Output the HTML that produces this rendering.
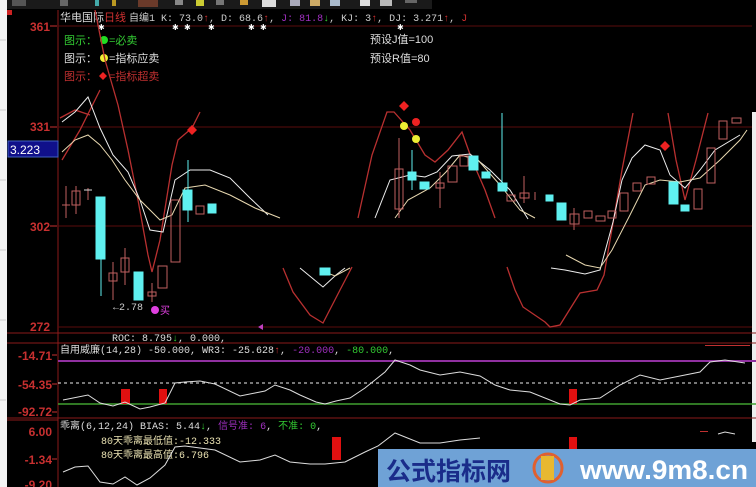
<!DOCTYPE html>
<html><head><meta charset="utf-8"><style>
html,body{margin:0;padding:0;background:#000;width:756px;height:487px;overflow:hidden}
svg{display:block}
text{font-family:"Liberation Sans","Noto Sans CJK SC",sans-serif}
.m{font-family:"Liberation Mono","Noto Sans CJK SC",monospace}
</style></head><body>
<svg width="756" height="487" xmlns="http://www.w3.org/2000/svg">
<rect width="756" height="487" fill="#000"/>
<rect x="0" y="0" width="7" height="487" fill="#f4f4f4"/>
<g stroke="#ccc" stroke-width="1"><line x1="0" y1="40" x2="6" y2="40"/><line x1="0" y1="110" x2="6" y2="110"/><line x1="0" y1="180" x2="6" y2="180"/><line x1="0" y1="250" x2="6" y2="250"/><line x1="0" y1="320" x2="6" y2="320"/><line x1="0" y1="400" x2="6" y2="400"/></g>
<rect x="752" y="112" width="4" height="330" fill="#eee"/>
<rect x="7" y="0" width="425" height="9" fill="#1a1a1a"/>
<g>
<rect x="12" y="0" width="14" height="6" fill="#555"/>
<rect x="60" y="0" width="8" height="6" fill="#666"/>
<rect x="95" y="0" width="4" height="6" fill="#4aa"/>
<rect x="112" y="0" width="4" height="6" fill="#b92"/>
<rect x="138" y="0" width="20" height="7" fill="#6a3a2a"/>
<rect x="175" y="0" width="8" height="5" fill="#888"/>
<rect x="196" y="0" width="8" height="6" fill="#cc3"/>
<rect x="216" y="0" width="8" height="5" fill="#777"/>
<rect x="240" y="0" width="8" height="5" fill="#c93"/>
<rect x="262" y="0" width="14" height="7" fill="#ddd"/>
<rect x="290" y="0" width="10" height="6" fill="#aab"/>
<rect x="310" y="0" width="10" height="6" fill="#ca6"/>
<rect x="330" y="0" width="10" height="6" fill="#abc"/>
<rect x="360" y="0" width="10" height="6" fill="#ddd"/>
<rect x="380" y="0" width="12" height="6" fill="#bbb"/>
<rect x="405" y="0" width="12" height="3" fill="#666"/>
</g>
<line x1="58" y1="10" x2="58" y2="487" stroke="#8a1a1a"/>
<rect x="7" y="10" width="5" height="5" fill="#c22"/>
<g stroke="#5a0c0c" stroke-width="1">
<line x1="58" y1="26" x2="752" y2="26"/>
<line x1="58" y1="127" x2="752" y2="127"/>
<line x1="58" y1="226" x2="752" y2="226"/>
<line x1="58" y1="327" x2="752" y2="327"/>
</g>
<line x1="7" y1="333" x2="756" y2="333" stroke="#8a1a1a"/>
<line x1="7" y1="343" x2="756" y2="343" stroke="#8a1a1a"/>
<line x1="7" y1="418" x2="756" y2="418" stroke="#8a1a1a"/>
<line x1="7" y1="420" x2="58" y2="420" stroke="#8a1a1a"/>
<g fill="#c83030" font-size="12" text-anchor="end" font-weight="bold">
<text x="50" y="31">361</text>
<text x="50" y="131">331</text>
<text x="50" y="231">302</text>
<text x="50" y="331">272</text>
<text x="52" y="360">-14.71</text>
<text x="52" y="389">-54.35</text>
<text x="52" y="416">-92.72</text>
<text x="52" y="436">6.00</text>
<text x="52" y="464">-1.34</text>
<text x="52" y="489">-9.20</text>
</g>
<g stroke="#c83030"><line x1="50" y1="26" x2="57" y2="26"/><line x1="50" y1="127" x2="57" y2="127"/><line x1="50" y1="226" x2="57" y2="226"/><line x1="52" y1="355" x2="57" y2="355"/><line x1="52" y1="384" x2="57" y2="384"/><line x1="52" y1="412" x2="57" y2="412"/><line x1="52" y1="459" x2="57" y2="459"/></g>
<rect x="8" y="141" width="50" height="16" fill="#10108a" stroke="#4060c0"/>
<text x="10" y="154" fill="#fff" font-size="12">3.223</text>
<text x="60" y="21" font-size="11" fill="#ddd">华电国际</text>
<text x="104" y="21" font-size="11" fill="#d03030">日线</text>
<text x="129" y="21" font-size="10" fill="#ccc" class="m">自编1 K: 73.0<tspan fill="#d03030">↑</tspan>, D: 68.6<tspan fill="#d03030">↑</tspan>, <tspan fill="#a030c0">J: 81.8</tspan><tspan fill="#3c3">↓</tspan>, KJ: 3<tspan fill="#d03030">↑</tspan>, DJ: 3.271<tspan fill="#d03030">↑</tspan>, <tspan fill="#d03030">J</tspan></text>
<g fill="#fff" font-size="8"><text x="98" y="30">✱</text><text x="172" y="30">✱</text><text x="184" y="30">✱</text><text x="208" y="30">✱</text><text x="248" y="30">✱</text><text x="260" y="30">✱</text><text x="397" y="30">✱</text></g>
<text x="64" y="44" font-size="11" fill="#3c3">图示：</text><circle cx="104" cy="40" r="4" fill="#2d2"/><text x="109" y="44" font-size="11" fill="#3c3">=必卖</text>
<text x="64" y="62" font-size="11" fill="#ddd">图示：</text><circle cx="104" cy="58" r="4" fill="#ee3"/><text x="109" y="62" font-size="11" fill="#ddd">=指标应卖</text>
<text x="64" y="80" font-size="11" fill="#c03030">图示：</text><path d="M103 72l4 4-4 4-4-4z" fill="#e22"/><text x="109" y="80" font-size="11" fill="#c03030">=指标超卖</text>
<text x="370" y="43" font-size="11" fill="#ddd">预设J值=100</text>
<text x="370" y="62" font-size="11" fill="#ddd">预设R值=80</text>
<g fill="none" stroke="#b83030" stroke-width="1.3">
<polyline points="95,10 105,60 118,105 128,150 138,200 148,255 152,272 160,240 172,165 178,140 192,128 200,112"/>
<polyline points="62,160 80,130 100,90"/>
<polyline points="283,268 293,292 310,315 323,323 340,290 352,267"/>
<polyline points="358,218 372,155 387,112 394,112 410,130 425,155 435,162 448,150 462,132 472,160 485,190 495,218"/>
<polyline points="507,267 515,290 523,307 545,322 550,327 560,325 580,293 597,290 604,275 613,223 622,170 633,113"/>
<polyline points="668,113 676,160 685,200 696,160 708,113"/>
<polyline points="60,118 75,110 90,115"/>
</g>
<g fill="none" stroke="#eee" stroke-width="1">
<polyline points="62,122 75,112 88,97 100,128 113,155 128,172 140,200 150,230 163,232 175,180 190,170 210,170 230,178 250,198 268,215"/>
<polyline points="375,218 390,180 410,175 425,177 437,172 452,156 470,154 490,170 510,190 528,219"/>
<polyline points="300,268 323,287 336,275 345,268"/>
<polyline points="551,268 565,270 585,274 600,270 613,222 622,180 632,158 645,145 660,150 670,175 685,188 700,170 715,150 740,135"/>
</g>
<g fill="none" stroke="#e8d8b0" stroke-width="1">
<polyline points="62,152 75,140 88,135 100,145 112,160 125,180 140,200 160,220 172,215 185,188 205,185 230,195 255,208 280,218"/>
<polyline points="395,218 408,200 430,188 446,172 460,155 478,160 500,185 520,210 535,218"/>
<polyline points="320,270 335,276 350,268"/>
<polyline points="566,255 585,265 600,268 612,250 630,215 645,185 660,180 680,182 700,178 720,160 740,140 747,130"/>
</g>
<g fill="#5ff0f0" stroke="#5ff0f0">
<rect x="96" y="197" width="9" height="62"/><line x1="101" y1="259" x2="101" y2="296"/>
<rect x="134" y="272" width="9" height="28"/>
<rect x="183" y="190" width="9" height="20"/><line x1="188" y1="160" x2="188" y2="222"/>
<rect x="208" y="204" width="8" height="9"/>
<rect x="320" y="268" width="10" height="7"/>
<rect x="408" y="172" width="8" height="8"/><line x1="412" y1="150" x2="412" y2="190"/>
<rect x="420" y="182" width="9" height="7"/>
<rect x="469" y="156" width="9" height="14"/>
<rect x="482" y="172" width="8" height="6"/>
<rect x="498" y="183" width="9" height="8"/><line x1="502" y1="113" x2="502" y2="183"/>
<rect x="546" y="195" width="7" height="6"/>
<rect x="557" y="203" width="9" height="17"/>
<rect x="669" y="182" width="9" height="22"/>
<rect x="681" y="205" width="8" height="6"/>
</g>
<g fill="none" stroke="#c06060">
<line x1="66" y1="186" x2="66" y2="218"/><line x1="62" y1="205" x2="70" y2="205"/>
<rect x="72" y="191" width="8" height="14"/><line x1="76" y1="186" x2="76" y2="214"/>
<line x1="88" y1="188" x2="88" y2="200"/><line x1="84" y1="190" x2="92" y2="190" stroke="#ddd"/>
<rect x="109" y="273" width="8" height="8"/><line x1="113" y1="262" x2="113" y2="300"/>
<rect x="121" y="258" width="8" height="14"/><line x1="125" y1="248" x2="125" y2="285"/>
<rect x="148" y="292" width="8" height="4"/><line x1="152" y1="283" x2="152" y2="302"/>
<rect x="158" y="266" width="9" height="22"/>
<rect x="171" y="200" width="9" height="62"/>
<rect x="196" y="206" width="8" height="8"/>
<rect x="395" y="169" width="8" height="40"/><line x1="399" y1="138" x2="399" y2="218"/>
<rect x="436" y="183" width="8" height="5"/><line x1="440" y1="172" x2="440" y2="208"/>
<rect x="448" y="166" width="9" height="16"/>
<rect x="460" y="156" width="8" height="10"/>
<rect x="507" y="195" width="8" height="6"/>
<rect x="520" y="193" width="9" height="5"/><line x1="524" y1="176" x2="524" y2="203"/>
<line x1="535" y1="192" x2="535" y2="200"/>
<rect x="570" y="214" width="9" height="10"/><line x1="574" y1="208" x2="574" y2="230"/>
<rect x="584" y="211" width="8" height="7"/>
<rect x="596" y="216" width="9" height="5"/>
<rect x="608" y="211" width="8" height="7"/>
<rect x="620" y="193" width="8" height="18"/>
<rect x="633" y="183" width="8" height="8"/>
<rect x="647" y="177" width="8" height="7"/>
<rect x="694" y="189" width="8" height="20"/>
<rect x="707" y="148" width="8" height="35"/>
<rect x="719" y="121" width="8" height="18"/>
<rect x="732" y="118" width="9" height="5"/>
</g>
<path d="M192 125l5 5-5 5-5-5z" fill="#e22"/>
<path d="M404 101l5 5-5 5-5-5z" fill="#e22"/>
<circle cx="404" cy="126" r="4" fill="#ee3"/><circle cx="416" cy="122" r="4" fill="#e22"/><circle cx="416" cy="139" r="4" fill="#ee3"/>
<path d="M665 141l5 5-5 5-5-5z" fill="#e22"/>
<text x="113" y="310" font-size="10" fill="#ccc" class="m">←2.78</text>
<circle cx="155" cy="310" r="4" fill="#e040e0"/><text x="160" y="314" font-size="10" fill="#e040e0">买</text>
<path d="M258 327l5-3v6z" fill="#c040c0"/>
<text x="112" y="341" font-size="10" fill="#ddd" class="m">ROC: 8.795<tspan fill="#3c3">↓</tspan>, 0.000,</text>
<text x="60" y="353" font-size="10" fill="#ddd" class="m">自用威廉(14,28) -50.000, WR3: -25.628<tspan fill="#d03030">↑</tspan>, <tspan fill="#a030c0">-20.000</tspan>, <tspan fill="#3c3">-80.000</tspan>,</text>
<line x1="58" y1="361" x2="756" y2="361" stroke="#9030a0" stroke-width="2"/>
<line x1="58" y1="383" x2="756" y2="383" stroke="#eee" stroke-dasharray="3,3"/>
<line x1="58" y1="404" x2="756" y2="404" stroke="#40a030" stroke-width="1.5"/>
<rect x="121" y="389" width="9" height="15" fill="#e01010"/>
<rect x="159" y="389" width="8" height="15" fill="#e01010"/>
<rect x="569" y="389" width="8" height="15" fill="#e01010"/>
<polyline fill="none" stroke="#ddd" points="63,400 88,395 100,403 113,406 125,402 140,409 150,407 165,403 175,383 185,382 200,381 215,384 240,396 255,393 265,391 275,385 290,390 300,395 316,402 325,404 336,401 350,398 365,388 385,372 395,360 410,365 420,370 440,375 460,372 480,376 495,385 510,390 530,392 550,400 560,404 570,405 580,400 600,398 620,385 640,375 660,380 680,376 700,372 710,362 725,360 745,363"/>
<rect x="705" y="345" width="45" height="1" fill="#c03030"/>
<text x="60" y="429" font-size="10" fill="#ddd" class="m">乖离(6,12,24) BIAS: 5.44<tspan fill="#3c3">↓</tspan>, <tspan fill="#a030c0">信号准: 6</tspan>, <tspan fill="#3c3">不准: 0</tspan>,</text>
<text x="101" y="444" font-size="10" fill="#e8e0b0" class="m">80天乖离最低值:-12.333</text>
<text x="101" y="458" font-size="10" fill="#e8e0b0" class="m">80天乖离最高值:6.796</text>
<rect x="332" y="437" width="9" height="23" fill="#e01010"/>
<rect x="569" y="437" width="8" height="12" fill="#e01010"/>
<polyline fill="none" stroke="#ddd" points="63,472 75,467 88,466 100,482 113,484 125,477 137,485 150,478 165,465 175,447 185,446 200,448 215,450 240,462 260,460 275,455 290,462 310,464 325,464 345,462 365,452 378,446 395,433 420,443 440,443 460,440 480,438"/>
<rect x="700" y="431" width="8" height="1" fill="#c03030"/>
<polyline fill="none" stroke="#ddd" points="718,434 725,432 735,434"/>
<rect x="378" y="449" width="378" height="38" fill="#6fa2d6"/>
<text x="386" y="480" font-size="25" font-weight="bold" fill="#1a2c8a" font-family="'Noto Sans CJK SC',sans-serif">公式指标网</text>
<circle cx="548" cy="468" r="14" fill="none" stroke="#e06030" stroke-width="3"/>
<rect x="541" y="456" width="13" height="24" fill="#e8b830"/>
<text x="580" y="479" font-size="27" font-weight="bold" fill="#fff" textLength="168" lengthAdjust="spacingAndGlyphs">www.9m8.cn</text>
</svg>
</body></html>
